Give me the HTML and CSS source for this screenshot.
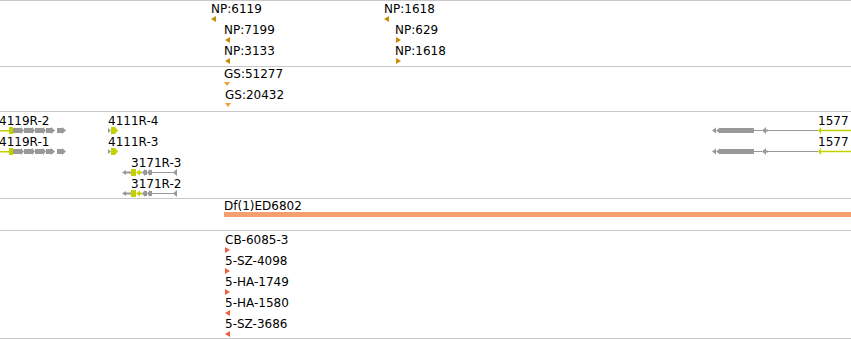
FILE: index.html
```html
<!DOCTYPE html>
<html lang="en">
<head>
  <meta charset="UTF-8" />
  <title>Tracks</title>
  <link rel="stylesheet" href="styles.css">
</head>
<body>
  <div class="tracks">

    <!-- NP insertions -->
    <div class="track track-np">
      <span class="label" style="left:211px;top:1px">NP:6119</span>
      <svg class="glyph" style="left:211px;top:15px" width="6" height="6"><polygon class="np" points="0,3 5,0 5,6"/></svg>
      <span class="label" style="left:224px;top:22px">NP:7199</span>
      <svg class="glyph" style="left:225px;top:36px" width="6" height="6"><polygon class="np" points="0,3 5,0 5,6"/></svg>
      <span class="label" style="left:224px;top:43px">NP:3133</span>
      <svg class="glyph" style="left:225px;top:57px" width="6" height="6"><polygon class="np" points="0,3 5,0 5,6"/></svg>

      <span class="label" style="left:384px;top:1px">NP:1618</span>
      <svg class="glyph" style="left:384px;top:15px" width="6" height="6"><polygon class="np" points="0,3 5,0 5,6"/></svg>
      <span class="label" style="left:395px;top:22px">NP:629</span>
      <svg class="glyph" style="left:396px;top:36px" width="6" height="6"><polygon class="np" points="0,0 5,3 0,6"/></svg>
      <span class="label" style="left:395px;top:43px">NP:1618</span>
      <svg class="glyph" style="left:396px;top:57px" width="6" height="6"><polygon class="np" points="0,0 5,3 0,6"/></svg>
    </div>

    <!-- GS insertions -->
    <div class="track track-gs">
      <span class="label" style="left:224px;top:0px">GS:51277</span>
      <svg class="glyph" style="left:224px;top:15px" width="7" height="5"><polygon class="gs" points="0,0 6,0 3,4"/></svg>
      <span class="label" style="left:225px;top:21px">GS:20432</span>
      <svg class="glyph" style="left:225px;top:36px" width="7" height="5"><polygon class="gs" points="0,0 6,0 3,4"/></svg>
    </div>

    <!-- gene models -->
    <div class="track track-genes">
      <span class="label" style="left:-1px;top:2px">4119R-2</span>
      <svg class="glyph" style="left:0;top:15px" width="68" height="7">
        <rect class="utr" x="0" y="3" width="10" height="1.5"/>
        <rect class="utr" x="9" y="0" width="4" height="7"/>
        <polygon class="cds" points="13,1 21,1 21,0 24,3.5 21,7 21,6 13,6"/>
        <polygon class="cds" points="24,1 32,1 32,0 35,3.5 32,7 32,6 24,6"/>
        <polygon class="cds" points="35,1 43,1 43,0 46,3.5 43,7 43,6 35,6"/>
        <polygon class="cds" points="46,1 51,1 51,0 55,3.5 51,7 51,6 46,6"/>
        <polygon class="cds" points="57,1 62,1 62,0 66,3.5 62,7 62,6 57,6"/>
      </svg>
      <span class="label" style="left:-1px;top:23px">4119R-1</span>
      <svg class="glyph" style="left:0;top:36px" width="68" height="7">
        <rect class="utr" x="0" y="3" width="10" height="1.5"/>
        <rect class="utr" x="9" y="0" width="4" height="7"/>
        <polygon class="cds" points="13,1 21,1 21,0 24,3.5 21,7 21,6 13,6"/>
        <polygon class="cds" points="24,1 32,1 32,0 35,3.5 32,7 32,6 24,6"/>
        <polygon class="cds" points="35,1 43,1 43,0 46,3.5 43,7 43,6 35,6"/>
        <polygon class="cds" points="46,1 51,1 51,0 55,3.5 51,7 51,6 46,6"/>
        <polygon class="cds" points="57,1 62,1 62,0 66,3.5 62,7 62,6 57,6"/>
      </svg>

      <span class="label" style="left:108px;top:2px">4111R-4</span>
      <svg class="glyph" style="left:108px;top:15px" width="11" height="7">
        <polygon class="cds" points="0,1 3,3.5 0,6"/>
        <polygon class="utr" points="3,0 7,0 10,3.5 7,7 3,7"/>
      </svg>
      <span class="label" style="left:108px;top:23px">4111R-3</span>
      <svg class="glyph" style="left:108px;top:36px" width="11" height="7">
        <polygon class="cds" points="0,1 3,3.5 0,6"/>
        <polygon class="utr" points="3,0 7,0 10,3.5 7,7 3,7"/>
      </svg>

      <span class="label" style="left:131px;top:44px">3171R-3</span>
      <svg class="glyph" style="left:122px;top:57px" width="57" height="7">
        <polygon class="cds" points="0,3.5 4,1 4,6"/>
        <rect class="cds" x="4" y="2.5" width="5" height="2"/>
        <rect class="utr" x="9" y="0" width="5" height="7"/>
        <polygon class="utr" points="14,3.5 18,0.5 18,6.5"/>
        <rect class="utr" x="18" y="2.5" width="2" height="2"/>
        <polygon class="cds" points="20,3.5 23,0 23,7"/>
        <rect class="cds" x="23" y="1" width="2" height="5"/>
        <polygon class="cds" points="25,3.5 28,0 28,7"/>
        <rect class="cds" x="28" y="1" width="2" height="5"/>
        <rect class="cds" x="30" y="3" width="24" height="1"/>
        <polygon class="cds" points="51,3.5 55,0 55,7"/>
      </svg>
      <span class="label" style="left:131px;top:65px">3171R-2</span>
      <svg class="glyph" style="left:122px;top:78px" width="57" height="7">
        <polygon class="cds" points="0,3.5 4,1 4,6"/>
        <rect class="cds" x="4" y="2.5" width="5" height="2"/>
        <rect class="utr" x="9" y="0" width="5" height="7"/>
        <polygon class="utr" points="14,3.5 18,0.5 18,6.5"/>
        <rect class="utr" x="18" y="2.5" width="2" height="2"/>
        <polygon class="cds" points="20,3.5 23,0 23,7"/>
        <rect class="cds" x="23" y="1" width="2" height="5"/>
        <polygon class="cds" points="25,3.5 28,0 28,7"/>
        <rect class="cds" x="28" y="1" width="2" height="5"/>
        <rect class="cds" x="30" y="3" width="24" height="1"/>
        <polygon class="cds" points="51,3.5 55,0 55,7"/>
      </svg>

      <span class="label" style="left:818px;top:2px">1577</span>
      <svg class="glyph" style="left:710px;top:15px" width="141" height="7">
        <polygon class="cds" points="2,3.5 6,0.5 6,6.5"/>
        <polygon class="cds" points="6,3.5 10,0.5 10,6.5"/>
        <rect class="cds" x="10" y="1" width="34" height="5"/>
        <rect class="cds" x="44" y="3" width="8" height="1"/>
        <polygon class="cds" points="52,3.5 56,0 56,7"/>
        <rect class="cds" x="56" y="2.5" width="2" height="2"/>
        <rect class="cds" x="58" y="3" width="50" height="1"/>
        <polygon class="utr" points="108,3.5 111,0 111,7"/>
        <rect class="utr" x="111" y="2.75" width="30" height="1.5"/>
      </svg>
      <span class="label" style="left:818px;top:23px">1577</span>
      <svg class="glyph" style="left:710px;top:36px" width="141" height="7">
        <polygon class="cds" points="2,3.5 6,0.5 6,6.5"/>
        <polygon class="cds" points="6,3.5 10,0.5 10,6.5"/>
        <rect class="cds" x="10" y="1" width="34" height="5"/>
        <rect class="cds" x="44" y="3" width="8" height="1"/>
        <polygon class="cds" points="52,3.5 56,0 56,7"/>
        <rect class="cds" x="56" y="2.5" width="2" height="2"/>
        <rect class="cds" x="58" y="3" width="50" height="1"/>
        <polygon class="utr" points="108,3.5 111,0 111,7"/>
        <rect class="utr" x="111" y="2.75" width="30" height="1.5"/>
      </svg>
    </div>

    <!-- deficiencies -->
    <div class="track track-df">
      <span class="label" style="left:224px;top:0px">Df(1)ED6802</span>
      <div class="df-bar" style="left:224px;top:13px"></div>
    </div>

    <!-- transposon insertions -->
    <div class="track track-te">
      <span class="label" style="left:225px;top:2px">CB-6085-3</span>
      <svg class="glyph" style="left:225px;top:16px" width="6" height="6"><polygon class="te" points="0,0 5,3 0,6"/></svg>
      <span class="label" style="left:225px;top:23px">5-SZ-4098</span>
      <svg class="glyph" style="left:225px;top:37px" width="6" height="6"><polygon class="te" points="0,0 5,3 0,6"/></svg>
      <span class="label" style="left:225px;top:44px">5-HA-1749</span>
      <svg class="glyph" style="left:225px;top:58px" width="6" height="6"><polygon class="te" points="0,0 5,3 0,6"/></svg>
      <span class="label" style="left:225px;top:65px">5-HA-1580</span>
      <svg class="glyph" style="left:225px;top:79px" width="6" height="6"><polygon class="te" points="0,3 5,0 5,6"/></svg>
      <span class="label" style="left:225px;top:86px">5-SZ-3686</span>
      <svg class="glyph" style="left:225px;top:100px" width="6" height="6"><polygon class="te" points="0,3 5,0 5,6"/></svg>
    </div>

  </div>
</body>
</html>
```

FILE: styles.css
```css
:root {
  --rule: #c8c8c8;
  --gene-grey: #999999;
  --utr: #c4d100;
  --np: #c98b00;
  --gs: #f0a030;
  --df: #f4a06e;
  --te: #f0603c;
}

* {
  box-sizing: border-box;
}

body {
  margin: 0;
  padding: 0;
  background: #ffffff;
  font-family: 'DejaVu Sans', sans-serif;
  font-size: 12px;
  color: #000000;
}

.tracks {
  width: 851px;
  border-bottom: 1px solid var(--rule);
  overflow: hidden;
}

.track {
  position: relative;
  border-top: 1px solid var(--rule);
  overflow: hidden;
}

.track-np { height: 66px; }
.track-gs { height: 45px; }
.track-genes { height: 87px; }
.track-df { height: 32px; }
.track-te { height: 108px; }

.label {
  position: absolute;
  line-height: 14px;
  white-space: nowrap;
}

.glyph {
  position: absolute;
  display: block;
  overflow: visible;
}

.np { fill: var(--np); }
.gs { fill: var(--gs); }
.te { fill: var(--te); }
.cds { fill: var(--gene-grey); }
.utr { fill: var(--utr); }

.df-bar {
  position: absolute;
  right: 0;
  height: 5px;
  background: var(--df);
}
```
